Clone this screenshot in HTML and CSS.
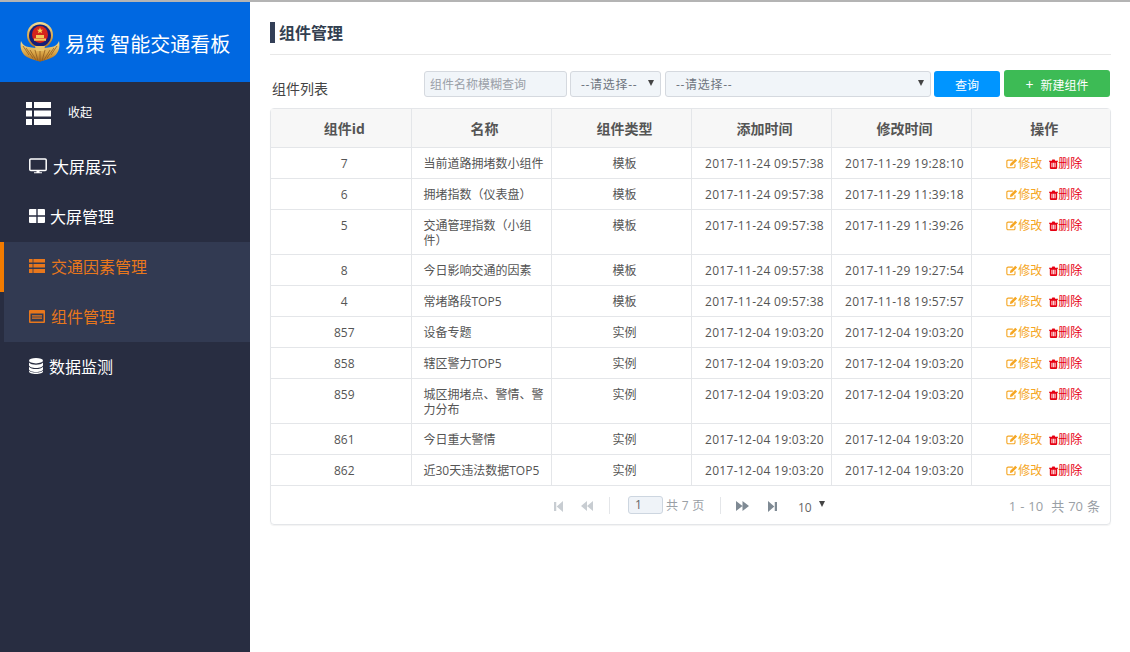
FILE: index.html
```html
<!DOCTYPE html>
<html lang="zh-CN">
<head>
<meta charset="utf-8">
<title>组件管理</title>
<link rel="stylesheet" href="styles.css">
</head>
<body>
<svg class="sprite" width="0" height="0">
  <symbol id="i-edit" viewBox="0 0 14 12"><path d="M10.5 7v2.6a1.4 1.4 0 0 1-1.4 1.4H2.4A1.4 1.4 0 0 1 1 9.600V3.400A1.400 1.400 0 0 1 2.400 2H8" fill="none" stroke="currentColor" stroke-width="1.300"/><path d="M5 6.200 10.800 .6l2.200 2-5.800 5.800-2.600.5z" fill="currentColor"/></symbol>
  <symbol id="i-trash" viewBox="0 0 11 12"><path d="M0 2h11v1.400H10V11a1 1 0 0 1-1 1H2a1 1 0 0 1-1-1V3.400H0zM3.500 2 4 .4h3L7.500 2zM3 4.500v5.500h1.200V4.500zM5 4.500v5.500h1V4.500zM6.800 4.500v5.500H8V4.500z" fill="currentColor" fill-rule="evenodd"/></symbol>
</svg>
<div class="topline"></div>
<div class="app">
  <aside class="sidebar">
    <div class="brand">
      <svg class="emblem" viewBox="0 0 40 40" width="40" height="40">
        <defs>
          <linearGradient id="gold" x1="0" y1="0" x2="0" y2="1"><stop offset="0" stop-color="#f4dc94"/><stop offset=".6" stop-color="#d9a445"/><stop offset="1" stop-color="#a8691f"/></linearGradient>
        </defs>
        <path d="M1 19C-.5 26 2 32 7 35c4 2.500 9 3.500 13 4.500 4-1 9-2 13-4.500 5-3 7.500-9 6-16-2 5-6 7-19 7S3 24 1 19z" fill="url(#gold)"/>
        <path d="M20 26v14M15 28l3 11M25 28l-3 11M10 28l6 10M30 28l-6 10M6 26l7 10M34 26l-7 10M3 24l6 9M37 24l-6 9" stroke="#8f5c1e" stroke-width=".8"/>
        <ellipse cx="20" cy="13" rx="13" ry="13" fill="url(#gold)"/>
        <ellipse cx="20" cy="13.500" rx="11" ry="11" fill="#141f78"/>
        <ellipse cx="20" cy="12.500" rx="8" ry="8.500" fill="#d4241c"/>
        <path d="M14 16.500h12v2.200H14zM16 13h8v3h-8z" fill="#f0c95a"/>
        <path d="M20 5.500l.9 2.200h2.300l-1.800 1.400.6 2.200-2-1.300-2 1.300.6-2.200-1.800-1.400h2.300z" fill="#f8d85a"/>
        <path d="M15 24h10l-1 5h-8z" fill="#e8c46a"/>
      </svg>
      <span class="brand-name">易策 智能交通看板</span>
    </div>
    <div class="collapse">
      <svg class="collapse-icon" viewBox="0 0 25 23" width="25" height="23"><path d="M0 0h6v6H0zM8 0h17v6H8zM0 8.500h6v6H0zM8 8.500h17v6H8zM0 17h6v6H0zM8 17h17v6H8z" fill="#fff"/></svg>
      <span class="collapse-text">收起</span>
    </div>
    <nav class="menu">
      <a class="item">
        <svg class="ico" viewBox="0 0 18 16" width="18" height="16"><path d="M1.800 1h14.400a1 1 0 0 1 1 1v9.500a1 1 0 0 1-1 1H1.800a1 1 0 0 1-1-1V2a1 1 0 0 1 1-1z" fill="none" stroke="#fff" stroke-width="1.500"/><path d="M7.500 12.500h3v1.800H13v1H5v-1h2.500z" fill="#fff"/></svg>
        <span class="label gap-d">大屏展示</span>
      </a>
      <a class="item">
        <svg class="ico" viewBox="0 0 16 14" width="16" height="14"><path d="M1 0h6.300v6.300H0V1a1 1 0 0 1 1-1zM8.700 0H15a1 1 0 0 1 1 1v5.300H8.700zM0 7.700h7.300V14H1a1 1 0 0 1-1-1zM8.700 7.700H16V13a1 1 0 0 1-1 1H8.700z" fill="#fff"/></svg>
        <span class="label gap-g">大屏管理</span>
      </a>
      <div class="group">
        <a class="item on bar">
          <svg class="ico" viewBox="0 0 16 14" width="16" height="14"><path d="M0 0h16v3.500H0zM0 5h16v3.500H0zM0 10h16v4H0z" fill="#e8771c"/><path d="M4 0v14" stroke="#323a52" stroke-width=".8"/></svg>
          <span class="label gap-g2">交通因素管理</span>
        </a>
        <a class="item on">
          <svg class="ico" viewBox="0 0 16 13" width="16" height="13"><path d="M1 0h14a1 1 0 0 1 1 1v11a1 1 0 0 1-1 1H1a1 1 0 0 1-1-1V1a1 1 0 0 1 1-1zM1.500 3.500v8h13v-8z" fill="#e8771c" fill-rule="evenodd"/><path d="M3 5.200h10v1.200H3zM3 7.500h10v1.200H3z" fill="#e8771c"/></svg>
          <span class="label gap-g2">组件管理</span>
        </a>
      </div>
      <a class="item">
        <svg class="ico" viewBox="0 0 14 16" width="14" height="16"><ellipse cx="7" cy="2.700" rx="7" ry="2.700" fill="#fff"/><path d="M0 4.500c1 1.700 4 2.200 7 2.200s6-.5 7-2.200v2.700C14 8.700 11 10 7 10S0 8.700 0 7.200zM0 8.700C1 10.400 4 11 7 11s6-.6 7-2.300v2.600c0 1.500-3 2.700-7 2.700s-7-1.200-7-2.700zM0 12.500c1 1.500 4 2 7 2s6-.5 7-2V13.500c0 1.400-3 2.500-7 2.500s-7-1.100-7-2.500z" fill="#fff"/></svg>
        <span class="label gap-g3">数据监测</span>
      </a>
    </nav>
  </aside>
  <main class="content">
    <h1 class="page-title">组件管理</h1>
    <div class="toolbar">
      <span class="list-title">组件列表</span>
      <div class="search-input">组件名称模糊查询</div>
      <div class="select sel-short"><span class="select-text">--请选择--</span><i class="caret"></i></div>
      <div class="select sel-long"><span class="select-text">--请选择--</span><i class="caret"></i></div>
      <button class="btn btn-query">查询</button>
      <button class="btn btn-new"><span class="plus">+</span>新建组件</button>
    </div>
    <div class="grid">
      <table class="data">
        <thead>
          <tr><th>组件id</th><th>名称</th><th>组件类型</th><th>添加时间</th><th>修改时间</th><th>操作</th></tr>
        </thead>
        <tbody>
          <tr><td>7</td><td class="name">当前道路拥堵数小组件</td><td>模板</td><td>2017-11-24 09:57:38</td><td>2017-11-29 19:28:10</td><td class="ops"><a class="edit"><svg width="12" height="11"><use href="#i-edit"/></svg>修改</a><a class="del"><svg width="9" height="10"><use href="#i-trash"/></svg>删除</a></td></tr>
          <tr><td>6</td><td class="name">拥堵指数（仪表盘）</td><td>模板</td><td>2017-11-24 09:57:38</td><td>2017-11-29 11:39:18</td><td class="ops"><a class="edit"><svg width="12" height="11"><use href="#i-edit"/></svg>修改</a><a class="del"><svg width="9" height="10"><use href="#i-trash"/></svg>删除</a></td></tr>
          <tr><td>5</td><td class="name">交通管理指数（小组件）</td><td>模板</td><td>2017-11-24 09:57:38</td><td>2017-11-29 11:39:26</td><td class="ops"><a class="edit"><svg width="12" height="11"><use href="#i-edit"/></svg>修改</a><a class="del"><svg width="9" height="10"><use href="#i-trash"/></svg>删除</a></td></tr>
          <tr><td>8</td><td class="name">今日影响交通的因素</td><td>模板</td><td>2017-11-24 09:57:38</td><td>2017-11-29 19:27:54</td><td class="ops"><a class="edit"><svg width="12" height="11"><use href="#i-edit"/></svg>修改</a><a class="del"><svg width="9" height="10"><use href="#i-trash"/></svg>删除</a></td></tr>
          <tr><td>4</td><td class="name">常堵路段TOP5</td><td>模板</td><td>2017-11-24 09:57:38</td><td>2017-11-18 19:57:57</td><td class="ops"><a class="edit"><svg width="12" height="11"><use href="#i-edit"/></svg>修改</a><a class="del"><svg width="9" height="10"><use href="#i-trash"/></svg>删除</a></td></tr>
          <tr><td>857</td><td class="name">设备专题</td><td>实例</td><td>2017-12-04 19:03:20</td><td>2017-12-04 19:03:20</td><td class="ops"><a class="edit"><svg width="12" height="11"><use href="#i-edit"/></svg>修改</a><a class="del"><svg width="9" height="10"><use href="#i-trash"/></svg>删除</a></td></tr>
          <tr><td>858</td><td class="name">辖区警力TOP5</td><td>实例</td><td>2017-12-04 19:03:20</td><td>2017-12-04 19:03:20</td><td class="ops"><a class="edit"><svg width="12" height="11"><use href="#i-edit"/></svg>修改</a><a class="del"><svg width="9" height="10"><use href="#i-trash"/></svg>删除</a></td></tr>
          <tr><td>859</td><td class="name">城区拥堵点、警情、警力分布</td><td>实例</td><td>2017-12-04 19:03:20</td><td>2017-12-04 19:03:20</td><td class="ops"><a class="edit"><svg width="12" height="11"><use href="#i-edit"/></svg>修改</a><a class="del"><svg width="9" height="10"><use href="#i-trash"/></svg>删除</a></td></tr>
          <tr><td>861</td><td class="name">今日重大警情</td><td>实例</td><td>2017-12-04 19:03:20</td><td>2017-12-04 19:03:20</td><td class="ops"><a class="edit"><svg width="12" height="11"><use href="#i-edit"/></svg>修改</a><a class="del"><svg width="9" height="10"><use href="#i-trash"/></svg>删除</a></td></tr>
          <tr><td>862</td><td class="name">近30天违法数据TOP5</td><td>实例</td><td>2017-12-04 19:03:20</td><td>2017-12-04 19:03:20</td><td class="ops"><a class="edit"><svg width="12" height="11"><use href="#i-edit"/></svg>修改</a><a class="del"><svg width="9" height="10"><use href="#i-trash"/></svg>删除</a></td></tr>
        </tbody>
      </table>
      <div class="pager">
        <svg class="pg first" viewBox="0 0 10 12" width="9" height="11" preserveAspectRatio="none"><path d="M0 1h2.500v10H0zM10 0v12L3 6z" fill="#c8cdd2"/></svg>
        <svg class="pg prev" viewBox="0 0 13 11" width="12" height="10" preserveAspectRatio="none"><path d="M6.500 0v11L0 5.500zM13 0v11L6.500 5.500z" fill="#c8cdd2"/></svg>
        <i class="sep sep-a"></i>
        <div class="page-box">1</div>
        <span class="page-total">共 7 页</span>
        <i class="sep"></i>
        <svg class="pg next" viewBox="0 0 13 11" width="13" height="10" preserveAspectRatio="none"><path d="M0 0v11l6.500-5.500zM6.500 0v11L13 5.500z" fill="#7f8a94"/></svg>
        <svg class="pg last" viewBox="0 0 10 12" width="9" height="11" preserveAspectRatio="none"><path d="M0 0v12l7-6zM7.500 1H10v10H7.500z" fill="#7f8a94"/></svg>
        <span class="page-size">10</span><i class="caret caret-size"></i>
        <span class="page-info">1 - 10 &nbsp;共 70 条</span>
      </div>
    </div>
  </main>
</div>
</body>
</html>
```
FILE: styles.css
```css
* { box-sizing: border-box; }
html, body { margin: 0; padding: 0; height: 100%; }
body {
  font-family: "Open Sans", "Noto Sans CJK SC", sans-serif;
  font-size: 12px;
  color: #555;
  background: #fff;
  overflow: hidden;
  text-spacing-trim: space-all;
}
.sprite { display: block; width: 0; height: 0; }
.topline { height: 2px; background: #b4b4b4; }
.app { display: flex; height: 650px; }

.sidebar { width: 250px; flex: none; background: #282d41; color: #fff; }
.brand {
  height: 80px;
  background: #0068e1;
  display: flex;
  align-items: center;
  padding-left: 20px;
}
.emblem { flex: none; margin-top: 0; }
.brand-name { font-size: 20px; margin-left: 5px; padding-top: 2px; white-space: nowrap; }
.collapse { height: 60px; display: flex; align-items: center; padding: 0 0 0 26px; }
.collapse-icon { margin-top: 2px; }
.collapse-text { font-size: 12px; margin-left: 17px; margin-top: -1px; }

.menu { display: block; }
.item {
  display: flex;
  align-items: center;
  height: 50px;
  padding-left: 29px;
  padding-bottom: 2px;
  color: #fff;
  font-size: 16px;
}
.label { white-space: nowrap; }
.gap-d { margin-left: 6px; }
.gap-g { margin-left: 5px; }
.gap-g2 { margin-left: 6px; }
.gap-g3 { margin-left: 6px; }
.group { background: #323a52; margin-left: 4px; }
.group .item { padding-left: 25px; }
.item.on { color: #e8771c; }
.item.bar { position: relative; }
.item.bar::before {
  content: "";
  position: absolute;
  left: -4px;
  top: 0;
  width: 4px;
  height: 50px;
  background: #f27b00;
}

.content { flex: 1; min-width: 0; padding: 20px 19px 0 20px; }
.page-title {
  margin: 0;
  height: 33px;
  border-bottom: 1px solid #e8e8e8;
  font-size: 16px;
  font-weight: 700;
  line-height: 22px;
  color: #333f50;
  display: flex;
  align-items: flex-start;
  padding-bottom: 11px;
}
.page-title::before {
  content: "";
  display: block;
  width: 5px;
  height: 21px;
  margin-right: 4px;
  background: #333f57;
}
.toolbar {
  display: flex;
  align-items: flex-start;
  height: 53px;
  padding-top: 15px;
  width: 840px;
}
.list-title { font-size: 14px; color: #444; width: 152px; margin-left: 2px; line-height: 18px; padding-top: 10px; flex: none; }
.search-input, .select {
  height: 26px;
  margin-top: 1px;
  background: #f1f5f9;
  border: 1px solid #d5d9df;
  border-radius: 3px;
  line-height: 26px;
  color: #8a9099;
  white-space: nowrap;
}
.search-input { width: 143px; padding-left: 5px; flex: none; color: #9aa0a8; }
.select { display: flex; justify-content: space-between; align-items: center; padding: 0 6px 0 10px; flex: none; color: #6f7680; }
.select-text { letter-spacing: .7px; padding-top: 1px; }
.sel-short { width: 91px; margin-left: 3px; }
.sel-long { width: 266px; margin-left: 4px; }
.caret {
  display: block;
  width: 0;
  height: 0;
  border-left: 3.500px solid transparent;
  border-right: 3.500px solid transparent;
  border-top: 6px solid #444;
  margin-top: -2px;
}
.btn {
  font: inherit;
  color: #fff;
  border: 0;
  border-radius: 3px;
  padding: 1px 0 0;
  flex: none;
}
.btn-query { width: 66px; height: 26px; margin: 1px 0 0 3px; background: #0095ff; }
.btn-new { width: 106px; height: 27px; margin-left: 4px; background: #3dbb55; }
.plus { font-size: 14px; margin-right: 7px; }

.grid {
  width: 841px;
  border: 1px solid #e4e6e9;
  border-radius: 4px;
  height: 417px;
  box-shadow: 0 1px 1px rgba(0,0,0,.05);
}
.data { border-collapse: collapse; table-layout: fixed; width: 839px; }
.data th {
  width: 140px;
  height: 38px;
  background: #f7f7f7;
  font-size: 14px;
  font-weight: 700;
  color: #555;
  border-left: 1px solid #e4e6e9;
  border-bottom: 1px solid #e4e6e9;
  text-align: center;
  padding: 0 0 0 7px;
}
.data td {
  height: 31px;
  padding: 8px 0 6px 7px;
  line-height: 15px;
  font-size: 12px;
  color: #555;
  border-left: 1px solid #e4e6e9;
  border-bottom: 1px solid #e4e6e9;
  text-align: center;
  vertical-align: top;
}
.data th:last-child { width: 139px; }
.data td:nth-child(4), .data td:nth-child(5) { letter-spacing: .3px; }
.data th:first-child, .data td:first-child { border-left: 0; }
.data td.name { text-align: left; padding-left: 12px; padding-right: 6px; }
.data td.ops { white-space: nowrap; }
.edit { color: #f5a623; }
.del { color: #e60012; margin-left: 7px; }
.ops svg { vertical-align: -1px; }

.pager {
  height: 39px;
  display: flex;
  align-items: center;
  color: #9aa0a6;
  padding-left: 283px;
}
.pg { flex: none; margin-top: 2px; }
.prev { margin-left: 18px; }
.sep { display: block; width: 1px; height: 17px; background: #e4e6e9; }
.sep-a { margin-left: 16px; }
.page-box {
  width: 35px;
  height: 18px;
  margin-left: 18px;
  border: 1px solid #cdd6e0;
  border-radius: 3px;
  background: #eff3f8;
  padding-left: 6px;
  line-height: 16px;
  color: #666;
}
.page-total { margin-left: 3px; width: 54px; letter-spacing: .3px; }
.next { margin-left: 15px; }
.last { margin-left: 19px; }
.page-size { margin-left: 21px; color: #666; padding-top: 4px; }
.caret-size { margin: -2px 0 0 7px; }
.page-info { margin-left: auto; margin-right: 10px; font-size: 13px; word-spacing: .6px; }
```
